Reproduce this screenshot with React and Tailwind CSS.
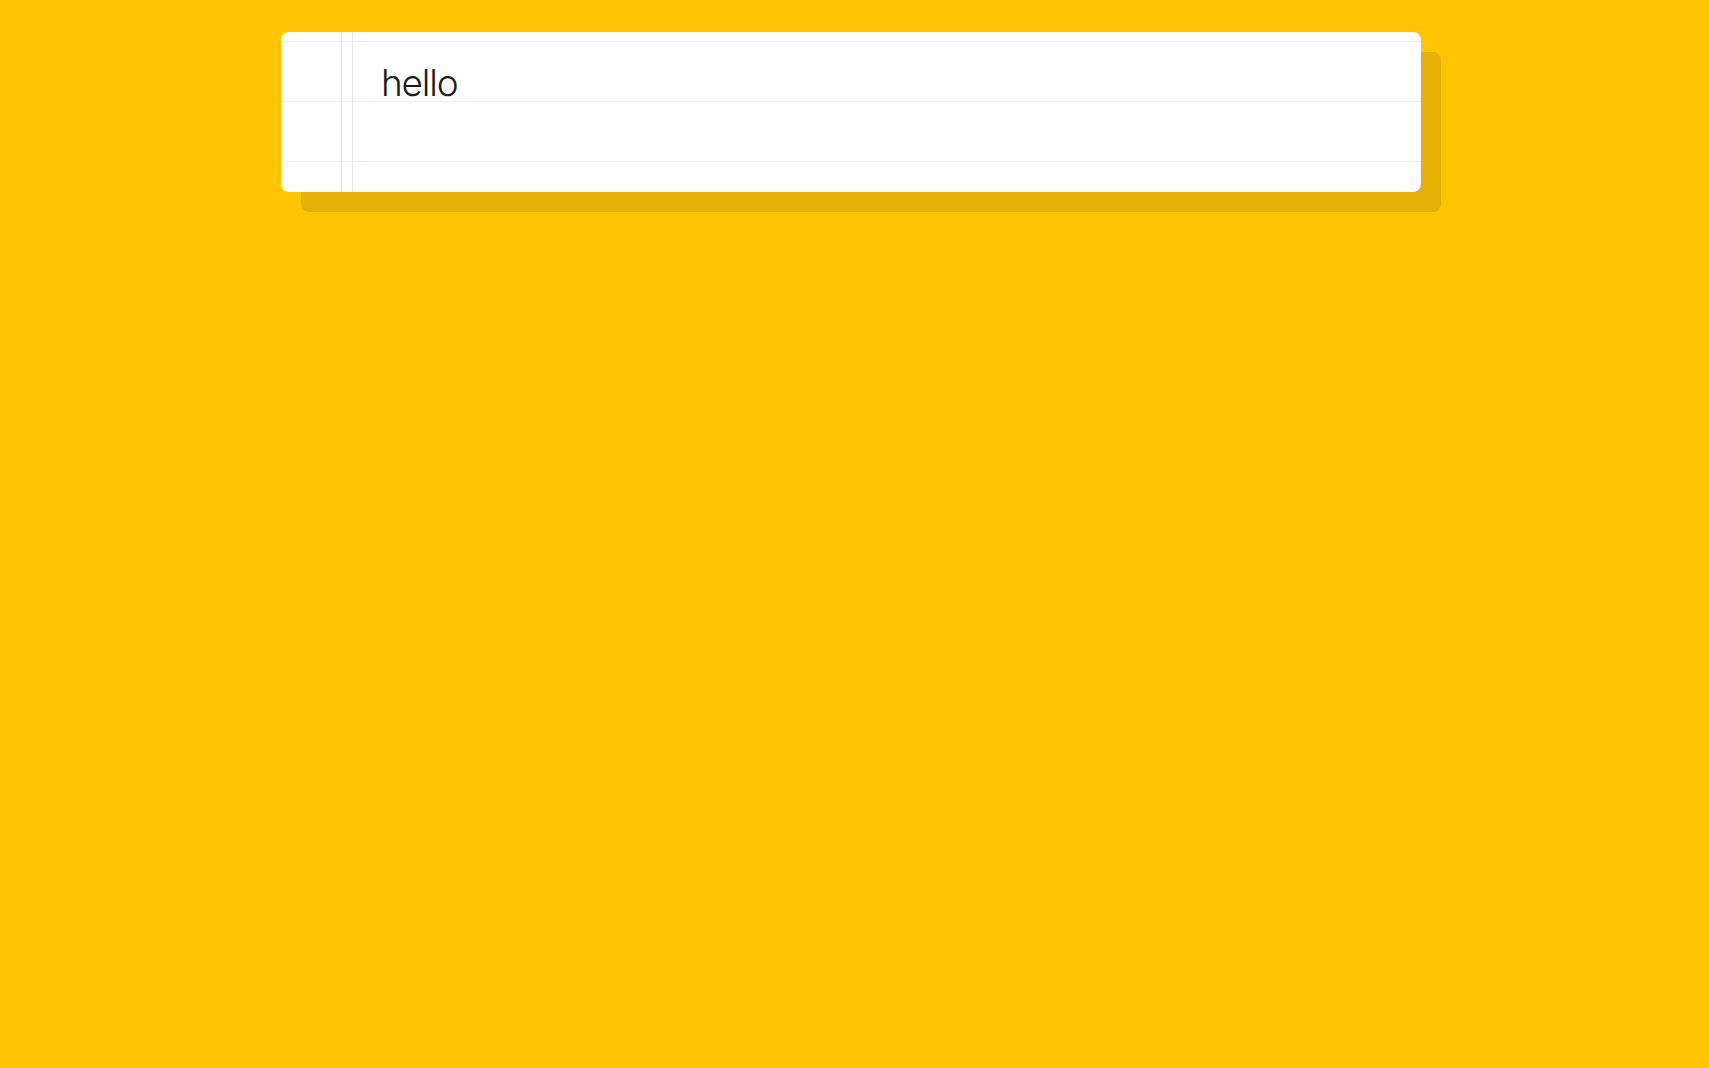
export default function App() {
  return (
    <div className="min-h-screen w-full bg-[#ffc502] pt-[32px]">
      <div className="relative ml-[281px] h-[160px] w-[1140px] overflow-hidden rounded-[8px] bg-white pt-[9px] shadow-[20px_20px_0_0_#e6b004]">
        <div className="flex h-[60px] items-end border-t border-[#eaeff6] pl-[100px]">
          <span
            className="pb-0 text-[37px] font-light leading-none tracking-[-1.2px] text-[#1c1c1c]"
            style={{ fontFamily: 'Inter, "Liberation Sans", Arial, sans-serif' }}
          >
            hello
          </span>
        </div>
        <div className="h-[60px] border-t border-[#eaeff6]" />
        <div className="h-[31px] border-t border-[#eaeff6]" />
        <div className="absolute bottom-0 left-[60px] top-0 w-px bg-[#ece0e8]" />
        <div className="absolute bottom-0 left-[71px] top-0 w-px bg-[#ece0e8]" />
      </div>
    </div>
  );
}
